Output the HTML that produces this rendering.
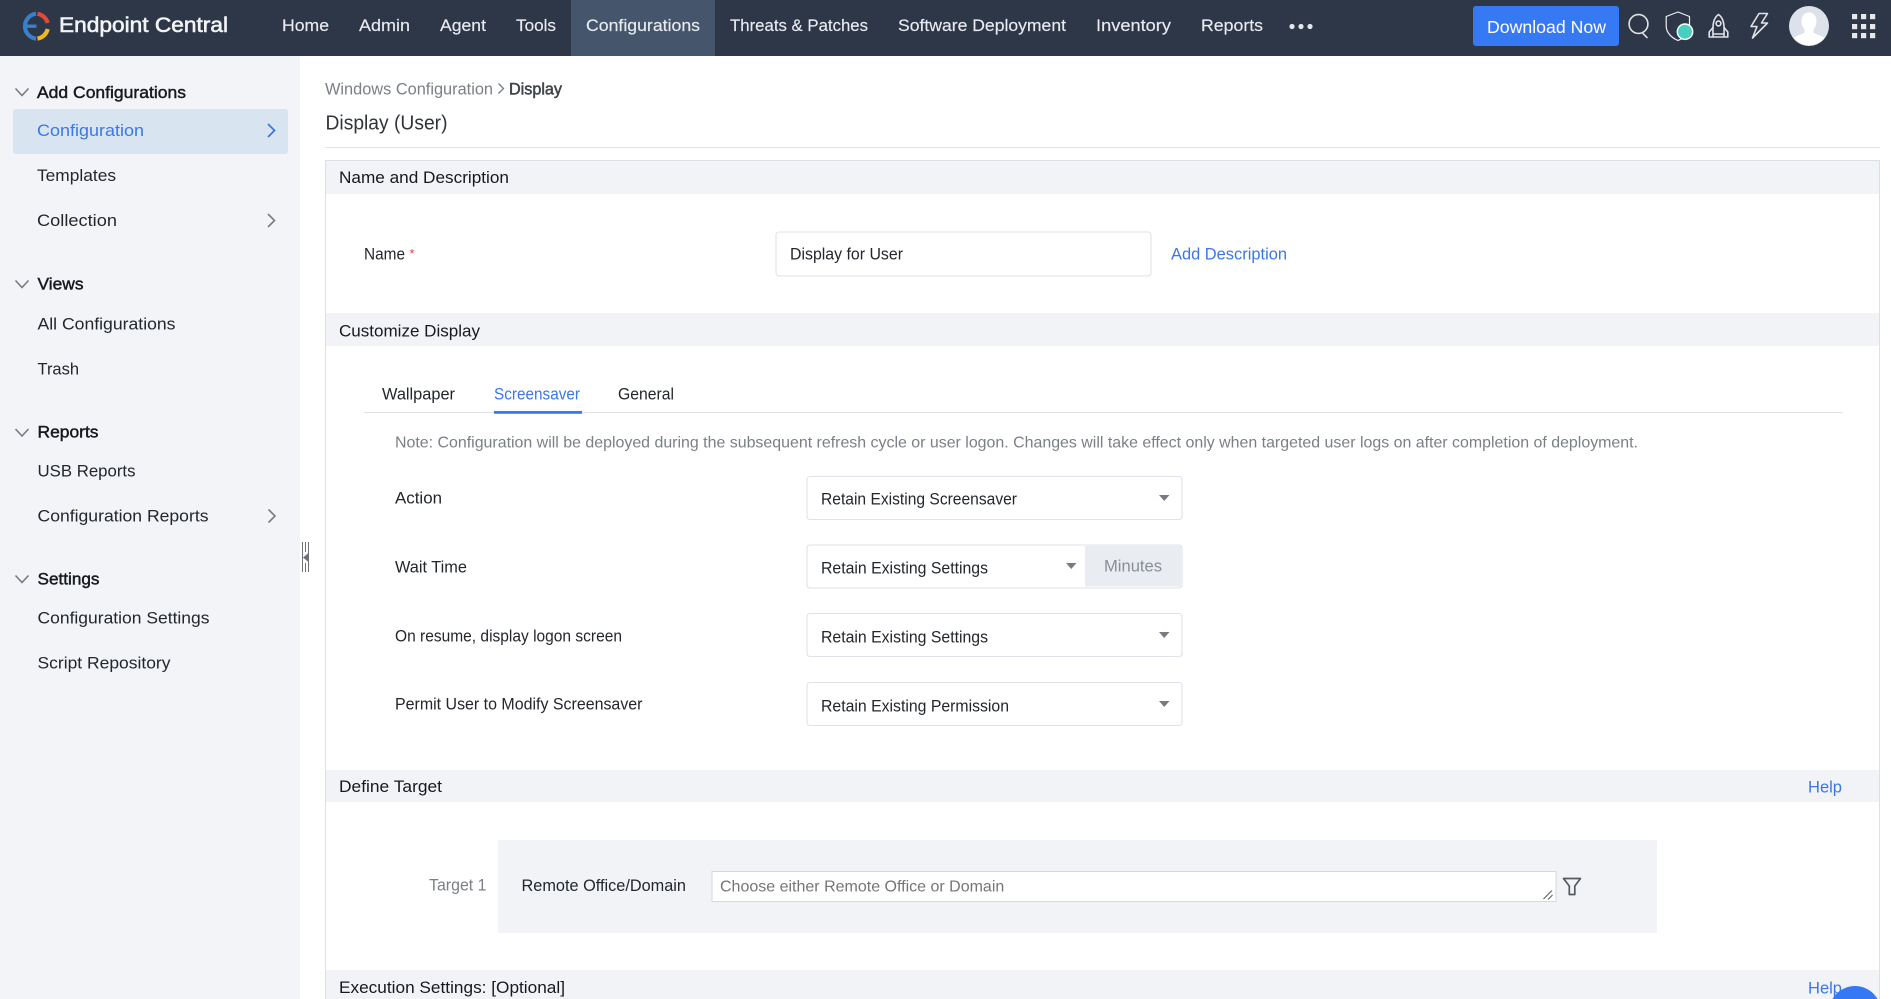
<!DOCTYPE html>
<html lang="en">
<head>
<meta charset="utf-8">
<title>Display (User) - Endpoint Central</title>
<style>
html,body{margin:0;padding:0;width:1891px;height:999px;overflow:hidden;background:#fff}
svg{display:block}
text{font-family:"Liberation Sans",Arial,sans-serif;font-size:16.5px;fill:#23272d}
.nav{fill:#e8ebf0;font-size:17px;stroke:#e8ebf0;stroke-width:.15px}
.hd{font-size:17px;fill:#16191e}
.sb{stroke:#16191e;stroke-width:.45px;fill:#16191e;font-size:17px}
.bl{fill:#3a78e6}
.gr{fill:#7b7f86}
.chev{fill:none;stroke:#777b82;stroke-width:1.6}
.ic{fill:none;stroke:#dfe2e7;stroke-width:1.6;stroke-linejoin:round;stroke-linecap:round}
.sel{fill:#fff;stroke:#dfe2e8;stroke-width:1.1}
.ar{fill:#777b82}
</style>
</head>
<body>
<svg width="1891" height="999" viewBox="0 0 1891 999" xmlns="http://www.w3.org/2000/svg">
<rect width="1891" height="999" fill="#fff"/>

<!-- Header -->
<rect width="1891" height="56" fill="#2e3748"/>
<rect x="571" width="144" height="56" fill="#45566c"/>
<g fill="none" stroke-width="4.2">
<path d="M36 13.700A12.600 12.600 0 0 0 36 38.700" stroke="#3a7fc9"/>
<path d="M37.500 13.800A12.600 12.600 0 0 1 47.700 23" stroke="#e0493c"/>
<path d="M47.700 29A12.600 12.600 0 0 1 37.500 38.600" stroke="#f3b71e"/>
<path d="M27 26.200H36.500" stroke="#3a7fc9" stroke-width="3.400"/>
</g>
<text x="59" y="32" textLength="169" lengthAdjust="spacingAndGlyphs" style="font-size:21px;fill:#f2f4f7;stroke:#f2f4f7;stroke-width:.6px">Endpoint Central</text>
<text class="nav" x="282" y="31" textLength="47" lengthAdjust="spacingAndGlyphs">Home</text>
<text class="nav" x="359" y="31" textLength="51" lengthAdjust="spacingAndGlyphs">Admin</text>
<text class="nav" x="440" y="31" textLength="46" lengthAdjust="spacingAndGlyphs">Agent</text>
<text class="nav" x="516" y="31" textLength="40" lengthAdjust="spacingAndGlyphs">Tools</text>
<text class="nav" x="586" y="31" textLength="114" lengthAdjust="spacingAndGlyphs">Configurations</text>
<text class="nav" x="730" y="31" textLength="138" lengthAdjust="spacingAndGlyphs">Threats &amp; Patches</text>
<text class="nav" x="898" y="31" textLength="168" lengthAdjust="spacingAndGlyphs">Software Deployment</text>
<text class="nav" x="1096" y="31" textLength="75" lengthAdjust="spacingAndGlyphs">Inventory</text>
<text class="nav" x="1201" y="31" textLength="62" lengthAdjust="spacingAndGlyphs">Reports</text>
<g fill="#e4e8ee"><circle cx="1292" cy="26.5" r="2.6"/><circle cx="1301" cy="26.5" r="2.6"/><circle cx="1310" cy="26.5" r="2.6"/></g>

<rect x="1473" y="6" width="146" height="40" rx="3" fill="#3679f5"/>
<text x="1487" y="33" textLength="119" lengthAdjust="spacingAndGlyphs" style="font-size:17.5px;fill:#fff">Download Now</text>

<circle class="ic" cx="1638.5" cy="24" r="9.4" stroke-width="1.8"/>
<path class="ic" d="M1642.5 33 1647 37.6" stroke-width="1.8"/>
<path class="ic" d="M1678 12 1689.5 16.5V26C1689.5 33 1684 38 1678 40.5 1672 38 1666.2 33 1666.2 26V16.5Z" style="stroke:#eef0f3;stroke-width:1.2"/>
<circle cx="1685" cy="31.7" r="7.7" fill="#48cfc0" stroke="#fff" stroke-width="1.4"/>
<path class="ic" d="M1718.5 14.5C1713.5 18 1712.5 24 1713 34H1724C1724.5 24 1723.5 18 1718.5 14.5Z"/>
<circle class="ic" cx="1718.5" cy="23.5" r="2.4"/>
<path class="ic" d="M1713 27.5 1709.2 32V37H1713V34M1724 27.5 1727.8 32V37H1724V34M1713.5 37H1723.5"/>
<path class="ic" d="M1759 13.500H1767.500L1761.500 23H1767.500L1752.500 38 1757 26.500H1751Z"/>

<circle cx="1809" cy="26" r="20" fill="#dde1ea"/>
<path d="M1809 12.5C1803.8 12.5 1801.5 16.5 1801.5 21.5 1801.5 25 1803 27.5 1804.5 29.5V32.5C1801 35 1795.5 35.5 1793.5 38A20 20 0 0 0 1824.5 38C1822.5 35.5 1817 35 1813.5 32.5V29.5C1815 27.5 1816.5 25 1816.5 21.5 1816.5 16.5 1814.2 12.5 1809 12.5Z" fill="#fff"/>
<g fill="#e6e8ec">
<rect x="1852" y="14" width="5.2" height="5.2"/><rect x="1861" y="14" width="5.2" height="5.2"/><rect x="1870" y="14" width="5.2" height="5.2"/>
<rect x="1852" y="24" width="5.2" height="5.2"/><rect x="1861" y="24" width="5.2" height="5.2"/><rect x="1870" y="24" width="5.2" height="5.2"/>
<rect x="1852" y="33" width="5.2" height="5.2"/><rect x="1861" y="33" width="5.2" height="5.2"/><rect x="1870" y="33" width="5.2" height="5.2"/>
</g>

<!-- Sidebar -->
<rect y="56" width="300" height="943" fill="#f2f4f8"/>
<rect x="13" y="109" width="275" height="45" rx="3" fill="#d8e5f1"/>

<path class="chev" d="M15.5 88.5 22 95.5 28.5 88.5"/>
<text class="sb" x="37" y="98" textLength="149" lengthAdjust="spacingAndGlyphs">Add Configurations</text>
<text class="bl" x="37" y="136" textLength="107" lengthAdjust="spacingAndGlyphs">Configuration</text>
<path class="chev" d="M268 124 274.5 130.500 268 137" style="stroke:#3a78e6;stroke-width:1.8"/>
<text x="37" y="181" textLength="79" lengthAdjust="spacingAndGlyphs">Templates</text>
<text x="37" y="226" textLength="80" lengthAdjust="spacingAndGlyphs">Collection</text>
<path class="chev" d="M268 214 274.500 220.500 268 227"/>

<path class="chev" d="M15.5 280.500 22 287.500 28.500 280.500"/>
<text class="sb" x="37.500" y="289.500" textLength="46" lengthAdjust="spacingAndGlyphs">Views</text>
<text x="37.500" y="329.500" textLength="138" lengthAdjust="spacingAndGlyphs">All Configurations</text>
<text x="37.500" y="374.500" textLength="41.500" lengthAdjust="spacingAndGlyphs">Trash</text>

<path class="chev" d="M15.5 429 22 436 28.500 429"/>
<text class="sb" x="37.500" y="437.500" textLength="61" lengthAdjust="spacingAndGlyphs">Reports</text>
<text x="37.500" y="476.500" textLength="98" lengthAdjust="spacingAndGlyphs">USB Reports</text>
<text x="37.500" y="521.500" textLength="171" lengthAdjust="spacingAndGlyphs">Configuration Reports</text>
<path class="chev" d="M268.500 509.500 275 516 268.500 522.500"/>

<path class="chev" d="M15.5 575.500 22 582.500 28.500 575.500"/>
<text class="sb" x="37.500" y="584.500" textLength="62" lengthAdjust="spacingAndGlyphs">Settings</text>
<text x="37.500" y="623.500" textLength="172" lengthAdjust="spacingAndGlyphs">Configuration Settings</text>
<text x="37.500" y="668.500" textLength="133" lengthAdjust="spacingAndGlyphs">Script Repository</text>

<!-- Splitter -->
<g stroke="#6e7178" stroke-width="1">
<path d="M302.500 542V572M305.500 542V552M305.500 563V572M308.500 542V572"/>
</g>
<path d="M303 557.500 309 552.500V562.500Z" fill="#6e7178"/>

<!-- Breadcrumb + title -->
<text class="gr" x="325" y="94.500" textLength="168" lengthAdjust="spacingAndGlyphs">Windows Configuration</text>
<path class="chev" d="M498.500 83.500 503.500 88.500 498.500 93.500" style="stroke-width:1.3"/>
<text x="509" y="94.500" textLength="53" lengthAdjust="spacingAndGlyphs" style="fill:#3f434a;stroke:#3f434a;stroke-width:.5px">Display</text>
<text x="325.500" y="129.500" textLength="122" lengthAdjust="spacingAndGlyphs" style="font-size:20px;fill:#30343a">Display (User)</text>
<rect x="325" y="147" width="1555" height="1" fill="#e0e2e6"/>

<!-- Panel -->
<rect x="325.500" y="160.500" width="1554" height="860" fill="#fff" stroke="#dcdfe6"/>
<rect x="326" y="161" width="1553" height="33" fill="#f1f3f7"/>
<text class="hd" x="339" y="183" textLength="170" lengthAdjust="spacingAndGlyphs">Name and Description</text>

<text x="364" y="259.500" textLength="41" lengthAdjust="spacingAndGlyphs">Name</text>
<text x="409.500" y="258" style="font-size:13px;fill:#e8384f">*</text>
<rect class="sel" x="776" y="232" width="375" height="44" rx="3"/>
<text x="790" y="259.500" textLength="113" lengthAdjust="spacingAndGlyphs">Display for User</text>
<text class="bl" x="1171" y="259.500" textLength="116" lengthAdjust="spacingAndGlyphs">Add Description</text>

<rect x="326" y="313" width="1553" height="33" fill="#f1f3f7"/>
<text class="hd" x="339" y="336.500" textLength="141" lengthAdjust="spacingAndGlyphs">Customize Display</text>

<!-- Tabs -->
<text x="382" y="399.500" textLength="73" lengthAdjust="spacingAndGlyphs">Wallpaper</text>
<text class="bl" x="494" y="399.500" textLength="86" lengthAdjust="spacingAndGlyphs">Screensaver</text>
<text x="618" y="399.500" textLength="56" lengthAdjust="spacingAndGlyphs">General</text>
<rect x="364" y="412" width="1478" height="1" fill="#dfe1e6"/>
<rect x="494" y="411" width="88" height="2.800" fill="#3979ee"/>

<text class="gr" x="395" y="447.500" textLength="1243" lengthAdjust="spacingAndGlyphs" style="font-size:16px">Note: Configuration will be deployed during the subsequent refresh cycle or user logon. Changes will take effect only when targeted user logs on after completion of deployment.</text>

<text x="395" y="503.500" textLength="47" lengthAdjust="spacingAndGlyphs">Action</text>
<rect class="sel" x="807" y="476.500" width="375" height="43" rx="3"/>
<text x="821" y="504.500" textLength="196" lengthAdjust="spacingAndGlyphs">Retain Existing Screensaver</text>
<path class="ar" d="M1159 495H1169.500L1164.250 501Z"/>

<text x="395" y="572.500" textLength="72" lengthAdjust="spacingAndGlyphs">Wait Time</text>
<rect class="sel" x="807" y="545" width="375" height="43" rx="3"/>
<rect x="1085" y="546" width="96" height="40.500" fill="#e9ecf1"/>
<text x="821" y="573.500" textLength="167" lengthAdjust="spacingAndGlyphs">Retain Existing Settings</text>
<path class="ar" d="M1066 563H1076.500L1071.250 569Z"/>
<text x="1104" y="571.500" textLength="58" lengthAdjust="spacingAndGlyphs" style="fill:#8a8e95">Minutes</text>

<text x="395" y="641.500" textLength="227" lengthAdjust="spacingAndGlyphs">On resume, display logon screen</text>
<rect class="sel" x="807" y="613.500" width="375" height="43" rx="3"/>
<text x="821" y="642.500" textLength="167" lengthAdjust="spacingAndGlyphs">Retain Existing Settings</text>
<path class="ar" d="M1159 632H1169.500L1164.250 638Z"/>

<text x="395" y="709.500" textLength="247.500" lengthAdjust="spacingAndGlyphs">Permit User to Modify Screensaver</text>
<rect class="sel" x="807" y="682.500" width="375" height="43" rx="3"/>
<text x="821" y="711.500" textLength="188" lengthAdjust="spacingAndGlyphs">Retain Existing Permission</text>
<path class="ar" d="M1159 701H1169.500L1164.250 707Z"/>

<!-- Define Target -->
<rect x="326" y="770" width="1553" height="32" fill="#f1f3f7"/>
<text class="hd" x="339" y="792" textLength="103" lengthAdjust="spacingAndGlyphs">Define Target</text>
<text class="bl" x="1808" y="792.500" textLength="34" lengthAdjust="spacingAndGlyphs">Help</text>

<rect x="498" y="840" width="1159" height="93" fill="#f1f3f7"/>
<text class="gr" x="429" y="890.500" textLength="57.500" lengthAdjust="spacingAndGlyphs">Target 1</text>
<text x="521.500" y="891" textLength="164.500" lengthAdjust="spacingAndGlyphs">Remote Office/Domain</text>
<rect x="712" y="871.500" width="844" height="30" fill="#fff" stroke="#d5d7dc"/>
<text x="720" y="891.500" style="font-size:16px;fill:#757575">Choose either Remote Office or Domain</text>
<path d="M1543.500 899 1552 890.500M1548 899.500 1552.500 895" stroke="#666" stroke-width="1.200" fill="none"/>
<path d="M1563.500 878.500H1580.500L1574.800 886V894.500H1569.300V886Z" fill="none" stroke="#555a60" stroke-width="1.700" stroke-linejoin="round"/>

<!-- Execution -->
<rect x="326" y="970" width="1553" height="29" fill="#f1f3f7"/>
<text class="hd" x="339" y="993" textLength="226" lengthAdjust="spacingAndGlyphs">Execution Settings: [Optional]</text>
<text class="bl" x="1808" y="993.500" textLength="34" lengthAdjust="spacingAndGlyphs">Help</text>
<circle cx="1855" cy="1012" r="26" fill="#3478f6"/>
<rect x="1880" y="160" width="11" height="839" fill="#fff"/>
</svg>
</body>
</html>
